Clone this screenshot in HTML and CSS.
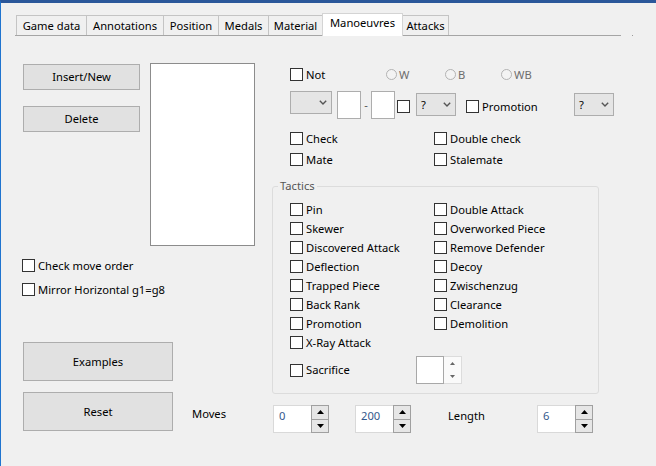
FILE: index.html
```html
<!DOCTYPE html>
<html>
<head>
<meta charset="utf-8">
<link rel="stylesheet" href="styles.css">
</head>
<body>
<div class="tabrow">
  <div class="tabstrip">
    <div class="tab w-game">Game data</div>
    <div class="tab w-ann">Annotations</div>
    <div class="tab w-pos">Position</div>
    <div class="tab w-med">Medals</div>
    <div class="tab w-mat">Material</div>
    <div class="tab active w-man">Manoeuvres</div>
    <div class="tab w-att">Attacks</div>
  </div>
  <div class="dot"></div>
</div>

<div class="content">
  <div class="left">
    <div class="topleft">
      <div class="btncol">
        <div class="btn">Insert/New</div>
        <div class="btn">Delete</div>
      </div>
      <div class="listbox"></div>
    </div>
    <div class="cb lcb first"><span class="box"></span><span>Check move order</span></div>
    <div class="cb lcb"><span class="box"></span><span>Mirror Horizontal g1=g8</span></div>
    <div class="btn bigbtn examples">Examples</div>
    <div class="resetrow">
      <div class="btn bigbtn">Reset</div>
      <div class="moves">Moves</div>
    </div>
  </div>

  <div class="right">
    <div class="row1">
      <div class="cb not"><span class="box"></span><span>Not</span></div>
      <div class="radio r-w"><span class="circle"></span><span>W</span></div>
      <div class="radio r-b"><span class="circle"></span><span>B</span></div>
      <div class="radio"><span class="circle"></span><span>WB</span></div>
    </div>

    <div class="row2">
      <div class="select sel1"><span></span><svg class="chev" width="8" height="5" viewBox="0 0 8 5"><polyline points="0.8,0.8 4,4 7.2,0.8" fill="none" stroke="#555" stroke-width="1.4"/></svg></div>
      <div class="textbox tb1"></div>
      <div class="dash">-</div>
      <div class="textbox"></div>
      <span class="box solo"></span>
      <div class="select sel-q gap6"><span>?</span><svg class="chev" width="8" height="5" viewBox="0 0 8 5"><polyline points="0.8,0.8 4,4 7.2,0.8" fill="none" stroke="#555" stroke-width="1.4"/></svg></div>
      <div class="cb promo"><span class="box"></span><span>Promotion</span></div>
      <div class="select sel-q"><span>?</span><svg class="chev" width="8" height="5" viewBox="0 0 8 5"><polyline points="0.8,0.8 4,4 7.2,0.8" fill="none" stroke="#555" stroke-width="1.4"/></svg></div>
    </div>

    <div class="checks">
      <div class="cb"><span class="box"></span><span>Check</span></div>
      <div class="cb"><span class="box"></span><span>Double check</span></div>
      <div class="cb"><span class="box"></span><span>Mate</span></div>
      <div class="cb"><span class="box"></span><span>Stalemate</span></div>
    </div>

    <fieldset class="tactics">
      <legend>Tactics</legend>
      <div class="tgrid">
        <div class="cb"><span class="box"></span><span>Pin</span></div>
        <div class="cb"><span class="box"></span><span>Double Attack</span></div>
        <div class="cb"><span class="box"></span><span>Skewer</span></div>
        <div class="cb"><span class="box"></span><span>Overworked Piece</span></div>
        <div class="cb"><span class="box"></span><span>Discovered Attack</span></div>
        <div class="cb"><span class="box"></span><span>Remove Defender</span></div>
        <div class="cb"><span class="box"></span><span>Deflection</span></div>
        <div class="cb"><span class="box"></span><span>Decoy</span></div>
        <div class="cb"><span class="box"></span><span>Trapped Piece</span></div>
        <div class="cb"><span class="box"></span><span>Zwischenzug</span></div>
        <div class="cb"><span class="box"></span><span>Back Rank</span></div>
        <div class="cb"><span class="box"></span><span>Clearance</span></div>
        <div class="cb"><span class="box"></span><span>Promotion</span></div>
        <div class="cb"><span class="box"></span><span>Demolition</span></div>
        <div class="cb"><span class="box"></span><span>X-Ray Attack</span></div>
      </div>
      <div class="sacrow">
        <div class="cb sac"><span class="box"></span><span>Sacrifice</span></div>
        <div class="fspin">
          <div class="fval"></div>
          <div class="fbtns">
            <span class="fb"><svg width="5" height="3" viewBox="0 0 5 3"><polygon points="0,3 2.5,0 5,3" fill="#666"/></svg></span>
            <span class="fb"><svg width="5" height="3" viewBox="0 0 5 3"><polygon points="0,0 2.5,3 5,0" fill="#666"/></svg></span>
          </div>
        </div>
      </div>
    </fieldset>

    <div class="spinrow">
      <div class="spin s1">
        <div class="val">0</div>
        <div class="btns">
          <span class="sbtn"><svg width="7" height="4" viewBox="0 0 7 4"><polygon points="0,4 3.5,0 7,4" fill="#000"/></svg></span>
          <span class="sbtn"><svg width="7" height="4" viewBox="0 0 7 4"><polygon points="0,0 3.5,4 7,0" fill="#000"/></svg></span>
        </div>
      </div>
      <div class="spin s2">
        <div class="val">200</div>
        <div class="btns">
          <span class="sbtn"><svg width="7" height="4" viewBox="0 0 7 4"><polygon points="0,4 3.5,0 7,4" fill="#000"/></svg></span>
          <span class="sbtn"><svg width="7" height="4" viewBox="0 0 7 4"><polygon points="0,0 3.5,4 7,0" fill="#000"/></svg></span>
        </div>
      </div>
      <div class="len">Length</div>
      <div class="spin">
        <div class="val">6</div>
        <div class="btns">
          <span class="sbtn"><svg width="7" height="4" viewBox="0 0 7 4"><polygon points="0,4 3.5,0 7,4" fill="#000"/></svg></span>
          <span class="sbtn"><svg width="7" height="4" viewBox="0 0 7 4"><polygon points="0,0 3.5,4 7,0" fill="#000"/></svg></span>
        </div>
      </div>
    </div>
  </div>
</div>
</body>
</html>
```

FILE: styles.css
```css
* { box-sizing: border-box; }

html { background: #f0f0f0; }

body {
  margin: 0;
  height: 466px;
  overflow: hidden;
  background: #f0f0f0;
  border-top: 3px solid #2b579a;
  border-left: 1px solid #1f74cf;
  font-family: "Noto Sans", "Segoe UI", sans-serif;
  font-size: 11.2px;
  line-height: 16px;
  color: #000;
}

/* tabs */
.tabrow { display: flex; margin: 10px 0 0 14px; }
.tabstrip {
  display: flex;
  align-items: flex-end;
  width: 606px;
  height: 23px;
  padding-left: 1px;
  border-bottom: 1px solid #a5a5a5;
}
.tab {
  height: 20px;
  border: 1px solid #c4c4c4;
  border-bottom: 0;
  margin-right: -1px;
  display: flex;
  align-items: center;
  justify-content: center;
  background: #f0f0f0;
  white-space: nowrap;
}
.tab.active {
  height: 23px;
  margin-bottom: -1px;
  background: #fff;
  border-color: #d4d4d4;
  align-items: flex-start;
  padding-top: 1px;
  position: relative;
  z-index: 1;
}
.w-game { width: 71px; }
.w-ann { width: 78px; }
.w-pos { width: 56px; }
.w-med { width: 51px; }
.w-mat { width: 55px; }
.w-man { width: 81px; }
.w-att { width: 47px; }
.dot { width: 1px; height: 1px; background: #9a9a9a; margin-left: 11px; align-self: flex-end; }

/* layout */
.content { display: flex; margin-top: 27px; padding-left: 22px; }
.left { width: 232px; flex: none; display: flex; flex-direction: column; }
.right { margin-left: 17px; width: 342px; flex: none; display: flex; flex-direction: column; }

/* buttons */
.topleft { display: flex; align-items: flex-start; }
.btncol { display: flex; flex-direction: column; gap: 16px; padding-top: 1px; width: 117px; }
.btn {
  height: 26px;
  border: 1px solid #adadad;
  background: #e1e1e1;
  display: flex;
  align-items: center;
  justify-content: center;
  white-space: nowrap;
}
.bigbtn { width: 150px; height: 39px; flex: none; }
.examples { margin-top: 43px; }
.listbox { margin-left: 10px; width: 105px; height: 183px; background: #fff; border: 1px solid #8c8c8c; }

/* checkboxes */
.cb { display: flex; align-items: center; height: 19px; gap: 3px; white-space: nowrap; }
.box { width: 13px; height: 13px; border: 1px solid #333; background: #fff; flex: none; display: block; }
.lcb { margin-left: -1px; margin-top: 5px; }
.lcb.first { margin-top: 10px; }

.resetrow { display: flex; margin-top: 11px; }
.moves { margin-left: 19px; margin-top: 14px; }

/* right column rows */
.row1 { display: flex; align-items: center; height: 19px; margin-top: 2px; padding-left: 18px; }
.not { width: 96px; }
.radio { display: flex; align-items: center; gap: 2px; color: #6d6d6d; }
.r-w { width: 59px; }
.r-b { width: 56px; }
.circle { width: 11px; height: 11px; border-radius: 50%; border: 1px solid #b3b3b3; background: #f3f3f3; display: block; }

.row2 { display: flex; align-items: flex-start; margin-top: 7px; padding-left: 18px; }
.select {
  height: 23px;
  border: 1px solid #adadad;
  background: #e5e5e5;
  display: flex;
  align-items: center;
  justify-content: space-between;
  padding: 0 4px 0 4px;
  flex: none;
}
.chev { display: block; }
.sel1 { width: 42px; }
.sel-q { width: 40px; margin-top: 2px; }
.gap6 { margin-left: 6px; }
.textbox { width: 24px; height: 28px; background: #fff; border: 1px solid #adadad; flex: none; }
.tb1 { margin-left: 5px; }
.dash { width: 10px; height: 28px; display: flex; align-items: center; justify-content: center; color: #555; }
.solo { margin-left: 2px; margin-top: 9px; }
.promo { margin-left: 10px; width: 108px; margin-top: 6px; }

.checks { display: grid; grid-template-columns: 144px auto; row-gap: 2px; margin-top: 10px; padding-left: 18px; }

/* tactics group */
.tactics {
  margin: 10px 0 0 0;
  padding: 0 0 9px 0;
  border: 1px solid #dcdcdc;
  border-radius: 3px;
  width: 327px;
  min-width: 0;
}
.tactics legend { margin-left: 5px; padding: 0 2px; color: #555; line-height: 14px; }
.tgrid { display: grid; grid-template-columns: 144px auto; padding: 7px 0 0 17px; }
.sacrow { display: flex; align-items: center; height: 28px; margin-top: 4px; padding-left: 17px; }
.sac { width: 126px; }
.fspin { display: flex; width: 46px; height: 28px; }
.fval { width: 28px; background: #fff; border: 1px solid #a8a8a8; }
.fbtns { width: 18px; display: flex; flex-direction: column; border: 1px solid #dcdcdc; border-left: 0; background: #fafafa; }
.fb { flex: 1; display: flex; align-items: center; justify-content: center; }
.fb svg { display: block; }

/* spin row */
.spinrow { display: flex; align-items: flex-start; margin-top: 11px; }
.spin { width: 56px; height: 28px; display: flex; background: #fff; border: 1px solid #d9d9d9; flex: none; }
.s1 { margin-left: 1px; }
.s2 { margin-left: 26px; }
.val { flex: 1; padding: 2px 0 0 5px; color: #34588c; }
.btns { width: 18px; display: flex; flex-direction: column; margin: -1px -1px -1px 0; }
.sbtn { flex: 1; border: 1px solid #a0a0a0; background: #e6e6e6; display: flex; align-items: center; justify-content: center; }
.sbtn + .sbtn { border-top: 0; }
.sbtn svg { display: block; }
.len { margin-left: 37px; width: 89px; padding-top: 3px; }
```
